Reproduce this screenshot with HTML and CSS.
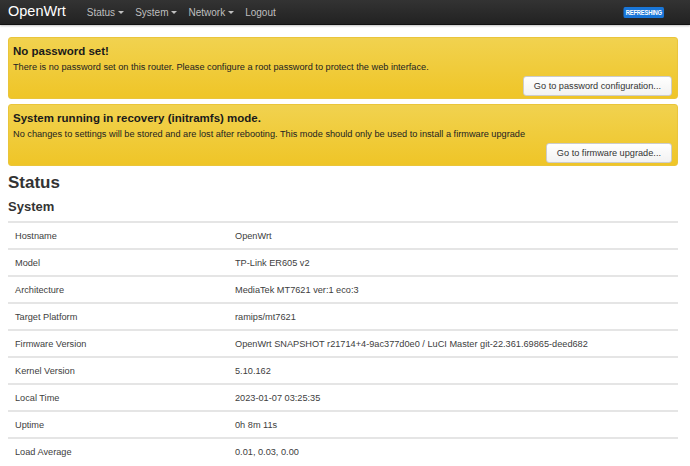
FILE: index.html
```html
<!DOCTYPE html>
<html>
<head>
<meta charset="utf-8">
<link rel="stylesheet" href="styles.css">
</head>
<body>
<header class="topbar">
  <a class="brand">OpenWrt</a>
  <nav class="nav">
    <span class="nav-item">Status <span class="caret"></span></span>
    <span class="nav-item">System <span class="caret"></span></span>
    <span class="nav-item">Network <span class="caret"></span></span>
    <span class="nav-item">Logout</span>
  </nav>
  <span class="badge">REFRESHING</span>
</header>
<main class="main">
  <div class="alert">
    <h4 class="alert-title">No password set!</h4>
    <p class="alert-text">There is no password set on this router. Please configure a root password to protect the web interface.</p>
    <div class="alert-actions"><button class="btn">Go to password configuration...</button></div>
  </div>
  <div class="alert">
    <h4 class="alert-title">System running in recovery (initramfs) mode.</h4>
    <p class="alert-text">No changes to settings will be stored and are lost after rebooting. This mode should only be used to install a firmware upgrade</p>
    <div class="alert-actions"><button class="btn">Go to firmware upgrade...</button></div>
  </div>
  <h2 class="page-title">Status</h2>
  <h3 class="section-title">System</h3>
  <table class="info">
    <tr><td class="key">Hostname</td><td>OpenWrt</td></tr>
    <tr><td class="key">Model</td><td>TP-Link ER605 v2</td></tr>
    <tr><td class="key">Architecture</td><td>MediaTek MT7621 ver:1 eco:3</td></tr>
    <tr><td class="key">Target Platform</td><td>ramips/mt7621</td></tr>
    <tr><td class="key">Firmware Version</td><td>OpenWrt SNAPSHOT r21714+4-9ac377d0e0 / LuCI Master git-22.361.69865-deed682</td></tr>
    <tr><td class="key">Kernel Version</td><td>5.10.162</td></tr>
    <tr><td class="key">Local Time</td><td>2023-01-07 03:25:35</td></tr>
    <tr><td class="key">Uptime</td><td>0h 8m 11s</td></tr>
    <tr><td class="key">Load Average</td><td>0.01, 0.03, 0.00</td></tr>
  </table>
</main>
</body>
</html>
```

FILE: styles.css
```css
html, body {
  margin: 0;
  padding: 0;
  background: #fff;
  font-family: "Liberation Sans", Arial, sans-serif;
  color: #404040;
}
.topbar {
  display: flex;
  align-items: center;
  height: 24px;
  padding: 0 8px;
  background: linear-gradient(#333333, #222222);
  border-bottom: 1px solid #111;
  box-shadow: 0 1px 2px rgba(0,0,0,0.25);
}
.brand {
  color: #fff;
  font-size: 14.5px;
  margin-right: 21px;
  margin-top: -3px;
}
.nav {
  display: flex;
  gap: 11px;
  flex: 1;
}
.nav-item {
  color: #bfbfbf;
  font-size: 10px;
  display: inline-flex;
  align-items: center;
}
.caret {
  display: inline-block;
  width: 0;
  height: 0;
  margin-left: 3px;
  border-left: 3px solid transparent;
  border-right: 3px solid transparent;
  border-top: 3px solid #bfbfbf;
}
.badge {
  background: #1976d8;
  color: #fff;
  font-size: 7.5px;
  font-weight: bold;
  letter-spacing: -0.3px;
  line-height: 9px;
  padding: 1px 3px;
  border-radius: 2px;
  margin-right: 18px;
  transform: scaleX(0.78);
  transform-origin: right center;
}
.main {
  padding: 12px 12px 0 8px;
}
.alert {
  background: linear-gradient(#f1d24f, #efc527);
  border: 1px solid #eac53a;
  border-radius: 3px;
  padding: 6px 5px 2px 4px;
  margin-bottom: 5px;
  color: #000;
}
.alert-title {
  margin: 0;
  font-size: 11.5px;
  font-weight: bold;
  line-height: 15px;
  color: #1a1a1a;
}
.alert-text {
  margin: 2px 0 0;
  font-size: 9.2px;
  line-height: 12px;
  color: #222;
}
.alert-actions {
  display: flex;
  justify-content: flex-end;
  margin-top: 3px;
}
.btn {
  font-family: "Liberation Sans", Arial, sans-serif;
  font-size: 9.2px;
  color: #333;
  background: linear-gradient(#ffffff, #f2f2f2);
  border: 1px solid #ccc;
  border-radius: 3px;
  height: 20px;
  padding: 0 10px;
}
.page-title {
  margin: 6px 0 0;
  font-size: 17px;
  line-height: 22px;
  color: #333;
}
.section-title {
  margin: 4px 0 0;
  font-size: 13px;
  line-height: 18px;
  color: #333;
}
.info {
  width: 100%;
  border-collapse: collapse;
  margin-top: 5px;
  font-size: 9.2px;
  color: #404040;
}
.info td {
  border-top: 2px solid #e5e5e5;
  height: 25px;
  padding: 0 7px;
  vertical-align: middle;
}
.info td.key {
  width: 206px;
}
```
